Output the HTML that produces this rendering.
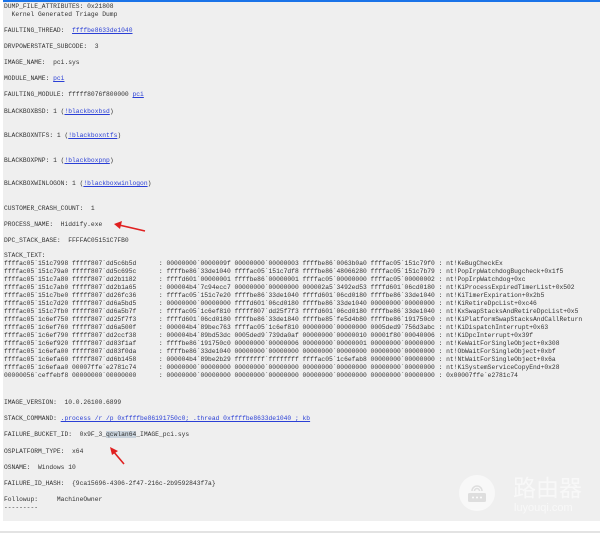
<!DOCTYPE html>
<html><head><meta charset="utf-8"><style>
html,body{margin:0;padding:0;}
body{width:600px;height:533px;background:#fff;position:relative;overflow:hidden;font-family:"Liberation Mono",monospace;font-size:6.3px;color:#333;}
#bg{position:absolute;left:3px;top:0;width:597px;height:521px;background:#efefef;border-top:2px solid #1a73e8;box-sizing:border-box;}
.l{position:absolute;left:4px;white-space:pre;line-height:8px;}
a{color:#2a3fd6;text-decoration:underline;}
.hl{background:#c9d3dc;}
#bot{position:absolute;left:0;top:531px;width:600px;height:2px;background:#e3e3e3;}
</style></head><body>
<div id="bg"></div>
<div class="l" style="top:3px">DUMP_FILE_ATTRIBUTES: 0x21808
  Kernel Generated Triage Dump</div>
<div class="l" style="top:27px">FAULTING_THREAD:  <a>ffffbe8633de1040</a></div>
<div class="l" style="top:43px">DRVPOWERSTATE_SUBCODE:  3</div>
<div class="l" style="top:59px">IMAGE_NAME:  pci.sys</div>
<div class="l" style="top:75px">MODULE_NAME: <a>pci</a></div>
<div class="l" style="top:91px">FAULTING_MODULE: fffff8076f800000 <a>pci</a></div>
<div class="l" style="top:108px">BLACKBOXBSD: 1 (<a>!blackboxbsd</a>)</div>
<div class="l" style="top:132px">BLACKBOXNTFS: 1 (<a>!blackboxntfs</a>)</div>
<div class="l" style="top:157px">BLACKBOXPNP: 1 (<a>!blackboxpnp</a>)</div>
<div class="l" style="top:180px">BLACKBOXWINLOGON: 1 (<a>!blackboxwinlogon</a>)</div>
<div class="l" style="top:205px">CUSTOMER_CRASH_COUNT:  1</div>
<div class="l" style="top:221px">PROCESS_NAME:  Hiddify.exe</div>
<div class="l" style="top:237px">DPC_STACK_BASE:  FFFFAC05151C7FB0</div>
<div class="l" style="top:252px">STACK_TEXT:
ffffac05`151c7998 fffff807`dd5c6b5d      : 00000000`0000009f 00000000`00000003 ffffbe86`0063b0a0 ffffac05`151c79f0 : nt!KeBugCheckEx
ffffac05`151c79a0 fffff807`dd5c695c      : ffffbe86`33de1040 ffffac05`151c7df8 ffffbe86`48066280 ffffac05`151c7b79 : nt!PopIrpWatchdogBugcheck+0x1f5
ffffac05`151c7a80 fffff807`dd2b1182      : ffffd601`00000001 ffffbe86`00000001 ffffac05`00000000 ffffac05`00000002 : nt!PopIrpWatchdog+0xc
ffffac05`151c7ab0 fffff807`dd2b1a65      : 000004b4`7c94ecc7 00000000`00000000 000002a5`3492ed53 ffffd601`06cd0180 : nt!KiProcessExpiredTimerList+0x502
ffffac05`151c7be0 fffff807`dd26fc36      : ffffac05`151c7e20 ffffbe86`33de1040 ffffd601`06cd0180 ffffbe86`33de1040 : nt!KiTimerExpiration+0x2b5
ffffac05`151c7d20 fffff807`dd6a5bd5      : 00000000`00000000 ffffd601`06cd0180 ffffbe86`33de1040 00000000`00000000 : nt!KiRetireDpcList+0xc46
ffffac05`151c7fb0 fffff807`dd6a5b7f      : ffffac05`1c6ef810 fffff807`dd25f7f3 ffffd601`06cd0180 ffffbe86`33de1040 : nt!KxSwapStacksAndRetireDpcList+0x5
ffffac05`1c6ef750 fffff807`dd25f7f3      : ffffd601`06cd0180 ffffbe86`33de1840 ffffbe85`fe5d4b80 ffffbe86`191750c0 : nt!KiPlatformSwapStacksAndCallReturn
ffffac05`1c6ef760 fffff807`dd6a500f      : 000004b4`89bec763 ffffac05`1c6ef810 00000000`00000000 0005ded9`756d3abc : nt!KiDispatchInterrupt+0x63
ffffac05`1c6ef790 fffff807`dd2ccf38      : 000004b4`89bd53dc 0005ded9`739da0af 00000000`00000010 00001f80`00040006 : nt!KiDpcInterrupt+0x39f
ffffac05`1c6ef920 fffff807`dd83f1af      : ffffbe86`191750c0 00000000`00000006 00000000`00000001 00000000`00000000 : nt!KeWaitForSingleObject+0x308
ffffac05`1c6efa00 fffff807`dd83f0da      : ffffbe86`33de1040 00000000`00000000 00000000`00000000 00000000`00000000 : nt!ObWaitForSingleObject+0xbf
ffffac05`1c6efa60 fffff807`dd6b1458      : 000004b4`89be2b29 ffffffff`ffffffff ffffac05`1c6efab8 00000000`00000000 : nt!NtWaitForSingleObject+0x6a
ffffac05`1c6efaa0 00007ffe`e2781c74      : 00000000`00000000 00000000`00000000 00000000`00000000 00000000`00000000 : nt!KiSystemServiceCopyEnd+0x28
00000056`ceffebf8 00000000`00000000      : 00000000`00000000 00000000`00000000 00000000`00000000 00000000`00000000 : 0x00007ffe`e2781c74</div>
<div class="l" style="top:399px">IMAGE_VERSION:  10.0.26100.6899</div>
<div class="l" style="top:415px">STACK_COMMAND: <a>.process /r /p 0xffffbe86191750c0; .thread 0xffffbe8633de1040 ; kb</a></div>
<div class="l" style="top:431px">FAILURE_BUCKET_ID:  0x9F_3_<span class="hl">qcwlan64</span>_IMAGE_pci.sys</div>
<div class="l" style="top:448px">OSPLATFORM_TYPE:  x64</div>
<div class="l" style="top:464px">OSNAME:  Windows 10</div>
<div class="l" style="top:480px">FAILURE_ID_HASH:  {9ca15696-4306-2f47-216c-2b9592843f7a}</div>
<div class="l" style="top:496px">Followup:     MachineOwner
---------</div>
<svg style="position:absolute;left:0;top:0" width="600" height="533">
<g stroke="#e02020" stroke-width="1.6" fill="#e02020">
<line x1="145" y1="231" x2="119" y2="225"/>
<polygon points="114,224 122,221 120,229" stroke="none"/>
<line x1="124" y1="464" x2="113" y2="451"/>
<polygon points="110,447 118,451 112,455" stroke="none"/>
</g>
<g opacity="0.85">
<circle cx="477" cy="493" r="18" fill="#fafafa"/>
<rect x="468" y="493" width="18" height="9" rx="1.5" fill="#dcdcdc"/>
<circle cx="473" cy="497.5" r="1" fill="#fff"/><circle cx="477" cy="497.5" r="1" fill="#fff"/><circle cx="481" cy="497.5" r="1" fill="#fff"/>
<path d="M472 491 a5 5 0 0 1 10 0 M474.5 491 a2.5 2.5 0 0 1 5 0" stroke="#dcdcdc" stroke-width="1.5" fill="none"/>
<text x="513" y="496" font-family="Noto Sans CJK SC,sans-serif" font-size="23" fill="#fafafa">路由器</text>
<text x="514" y="511" font-family="Liberation Sans,sans-serif" font-size="11" fill="#fafafa">luyouqi.com</text>
</g>
</svg>
<div id="bot"></div>
</body></html>
